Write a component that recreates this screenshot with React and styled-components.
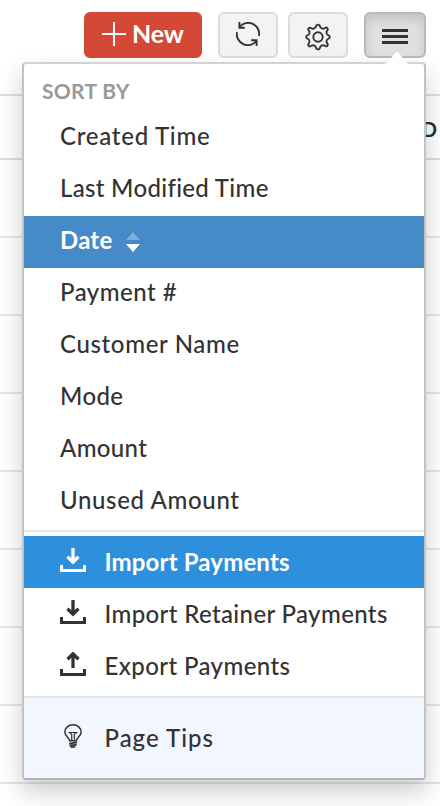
import React from "react";
import styled, { createGlobalStyle, css } from "styled-components";

const GlobalStyle = createGlobalStyle`
  *, *::before, *::after { box-sizing: border-box; }
  body { margin: 0; background: #fff; overflow: hidden; }
`;

const Page = styled.main`
  position: relative;
  width: 440px;
  height: 806px;
  overflow: hidden;
  background: #fff;
  color: #333;
  font: 500 24px/52px Lato, "Open Sans", sans-serif;
`;

const Toolbar = styled.header`
  display: flex;
  height: 94px;
  padding: 12px 14px 0 84px;
`;

const Button = styled.button`
  display: flex;
  align-items: center;
  justify-content: center;
  width: ${(p) => p.$width || 60}px;
  height: 46px;
  margin: 0 ${(p) => p.$gap || 0}px 0 0;
  padding: ${(p) => p.$drop || 0}px 0 ${(p) => p.$lift || 0}px;
  border: 2px solid #dcdcdc;
  border-radius: 6px;
  background: #f3f3f3;
  color: #333;
  font: inherit;
  svg { display: block; }
`;

const NewButton = styled(Button)`
  justify-content: flex-start;
  padding: 0 0 2px 16px;
  gap: 6px;
  border-color: #d44936;
  background: #d44936;
  color: #fff;
  font-size: 25px;
  font-weight: 700;
  line-height: 40px;
  letter-spacing: -0.2px;
  span { margin-top: -2px; }
`;

const ActiveButton = styled(Button)`
  border-color: #b9b9b9;
  background: #e0e0e0;
  box-shadow: inset 0 6px 10px rgba(0, 0, 0, 0.125);
`;

const TableHead = styled.div`
  display: flex;
  justify-content: flex-end;
  height: 66px;
  padding-right: 3px;
  border-top: 2px solid #dedede;
  border-bottom: 2px solid #dedede;
  color: #25303a;
  font-size: 20px;
  font-weight: 700;
  line-height: 66px;
`;

const TableRow = styled.div`
  height: 78px;
  border-bottom: 2px solid #e4e4e4;
`;

const Menu = styled.nav`
  position: absolute;
  top: 62px;
  left: 22px;
  width: 404px;
  height: 718px;
  border: 2px solid;
  border-color: #d3d3d3 #c2c2c2 #b2b2b2;
  border-radius: 4px;
  background: #fff;
  box-shadow: 0 12px 24px rgba(0, 0, 0, 0.2);
`;

const Notch = styled.svg`
  position: absolute;
  top: -12px;
  right: 12px;
  display: block;
`;

const MenuTitle = styled.div`
  height: 48px;
  padding-left: 18px;
  color: #999;
  font-size: 21px;
  font-weight: 700;
  line-height: 53px;
  letter-spacing: 0.3px;
`;

const highlights = {
  selected: css`background: #468bc8; color: #fff; font-weight: 700;`,
  hover: css`background: #2e90dc; color: #fff; font-weight: 700;`,
};

const MenuItem = styled.div`
  display: flex;
  align-items: center;
  height: 52px;
  padding-left: 36px;
  line-height: 48px;
  white-space: nowrap;
  ${(p) => highlights[p.$state]}
`;

const SortItem = styled(MenuItem)`
  padding-bottom: 4px;
`;

const Label = styled.span`
  letter-spacing: ${(p) => p.$track}px;
`;

const IconSlot = styled.span`
  display: flex;
  width: 44.5px;
  padding: 0 0 4px ${(p) => p.$inset || 0}px;
  flex: none;
`;

const Sorter = styled.svg`
  display: block;
  margin: 4px 0 0 14px;
`;

const Divider = styled.div`
  height: 2px;
  margin: 2px 0 4px;
  background: #e5e5e5;
`;

const Tips = styled(MenuItem)`
  height: 82px;
  margin-top: 4px;
  border-top: 2px solid #e2e4e6;
  background: #f2f6fe;
`;

const sortFields = [
  ["Created Time", 0.75],
  ["Last Modified Time", 0.32],
  ["Date", 0.2],
  ["Payment #", 0.5],
  ["Customer Name", 0.65],
  ["Mode", 0.4],
  ["Amount", 0.35],
  ["Unused Amount", 0.65],
];

function RefreshIcon() {
  return (
    <svg width="24" height="24" viewBox="0 0 24 24" fill="none" stroke="currentColor" strokeWidth="1.9">
      <path d="M3.6 5A11 11 0 0 1 23 13.8M20.4 19A11 11 0 0 1 1 10.2" />
      <path d="M3.4 0v5.7h5.4M20.6 24v-5.7h-5.4" />
    </svg>
  );
}

function GearIcon() {
  return (
    <svg width="26" height="28" viewBox="0 0 26 28" fill="none" stroke="currentColor" strokeWidth="1.9" strokeLinejoin="round">
      <path d="M11 3.6Q11.3 1.6 13 1.6T15 3.6Q15.4 5 17.2 5.6Q18.4 6 19.6 5.2Q21.2 4 22.3 5.2T22 7.8Q21.1 9.1 21.7 10.5Q22.2 12 23.2 12.1Q24.8 12.5 24.8 14T23.2 15.9Q22.2 16 21.7 17.5Q21.1 18.9 22 20.2Q23.4 21.7 22.3 22.8T19.6 22.8Q18.4 22 17.2 22.4Q15.4 23 15 24.4Q14.7 26.4 13 26.4T11 24.4Q10.6 23 8.8 22.4Q7.6 22 6.4 22.8Q4.8 24 3.7 22.8T4 20.2Q4.9 18.9 4.3 17.5Q3.8 16 2.8 15.9Q1.2 15.5 1.2 14T2.8 12.1Q3.8 12 4.3 10.5Q4.9 9.1 4 7.8Q2.6 6.3 3.7 5.2T6.4 5.2Q7.6 6 8.8 5.6Q10.6 5 11 3.6Z" />
      <circle cx="13" cy="14" r="4.7" />
    </svg>
  );
}

function TransferIcon({ up }) {
  return (
    <svg width="26" height="24" viewBox="0 0 26 24" fill="none" stroke="currentColor" strokeWidth="3">
      <path d="M1.5 17v5.5h23V17" />
      <path d={up ? "M13 16V2M7.5 7.2 13 1.8l5.5 5.4" : "M13 0v14M7.5 8.8 13 14.2l5.5-5.4"} strokeWidth="3.3" />
    </svg>
  );
}

function BulbIcon() {
  return (
    <svg width="18" height="24" viewBox="0 0 18 24" fill="none" stroke="currentColor" strokeWidth="1.5">
      <path d="M5.6 16.8C5.6 13.5.9 12.8.9 8a8.1 7.2 0 0 1 16.2 0c0 4.8-4.7 5.5-4.7 8.8Z" />
      <path d="M4.4 8.5h9.2M5.7 9l2 1v7M12.3 9l-2 1v7" strokeWidth="1.2" />
      <path d="m5.2 19.6 7.8-1.2M5.4 21.6l7.4-1M6.6 23.3l4.8-.5" strokeWidth="1.6" />
    </svg>
  );
}

export default function App() {
  return (
    <>
      <GlobalStyle />
      <Page>
        <Toolbar>
          <NewButton $width={118} $gap={16}>
            <svg width="24" height="24" viewBox="0 0 24 24" stroke="currentColor" strokeWidth="2">
              <path d="M12 0v24M0 12h24" />
            </svg>
            <span>New</span>
          </NewButton>
          <Button $gap={10} $lift={2} aria-label="Refresh"><RefreshIcon /></Button>
          <Button $gap={16} $drop={4} aria-label="Settings"><GearIcon /></Button>
          <ActiveButton $width={62} $drop={3} aria-label="More options">
            <svg width="26" height="15" viewBox="0 0 26 15" fill="currentColor">
              <path d="M0 0h26v3H0zM0 6h26v3H0zM0 12h26v3H0z" />
            </svg>
          </ActiveButton>
        </Toolbar>
        <TableHead>D</TableHead>
        {Array.from({ length: 8 }, (_, i) => <TableRow key={i} />)}
        <Menu>
          <Notch width="30" height="14" viewBox="0 0 30 14" fill="#fff">
            <path d="M2 14v-2q2-.2 4-2l7-8.8q2-2.2 4 0L24 10q2 1.8 4 2v2Z" />
          </Notch>
          <MenuTitle>SORT BY</MenuTitle>
          {sortFields.map(([name, track]) => (
            <SortItem key={name} $state={name === "Date" ? "selected" : undefined}>
              <Label $track={track}>{name}</Label>
              {name === "Date" && (
                <Sorter width="14" height="20" viewBox="0 0 14 20" fill="#fff">
                  <path d="M7 0l7 8H0z" opacity=".3" />
                  <path d="M0 12h14l-7 8z" />
                </Sorter>
              )}
            </SortItem>
          ))}
          <Divider />
          <MenuItem $state="hover">
            <IconSlot><TransferIcon /></IconSlot>
            <Label $track={0.15}>Import Payments</Label>
          </MenuItem>
          <MenuItem>
            <IconSlot><TransferIcon /></IconSlot>
            <Label $track={0.37}>Import Retainer Payments</Label>
          </MenuItem>
          <MenuItem>
            <IconSlot><TransferIcon up /></IconSlot>
            <Label $track={0.4}>Export Payments</Label>
          </MenuItem>
          <Tips>
            <IconSlot $inset={4}><BulbIcon /></IconSlot>
            <Label $track={1}>Page Tips</Label>
          </Tips>
        </Menu>
      </Page>
    </>
  );
}
